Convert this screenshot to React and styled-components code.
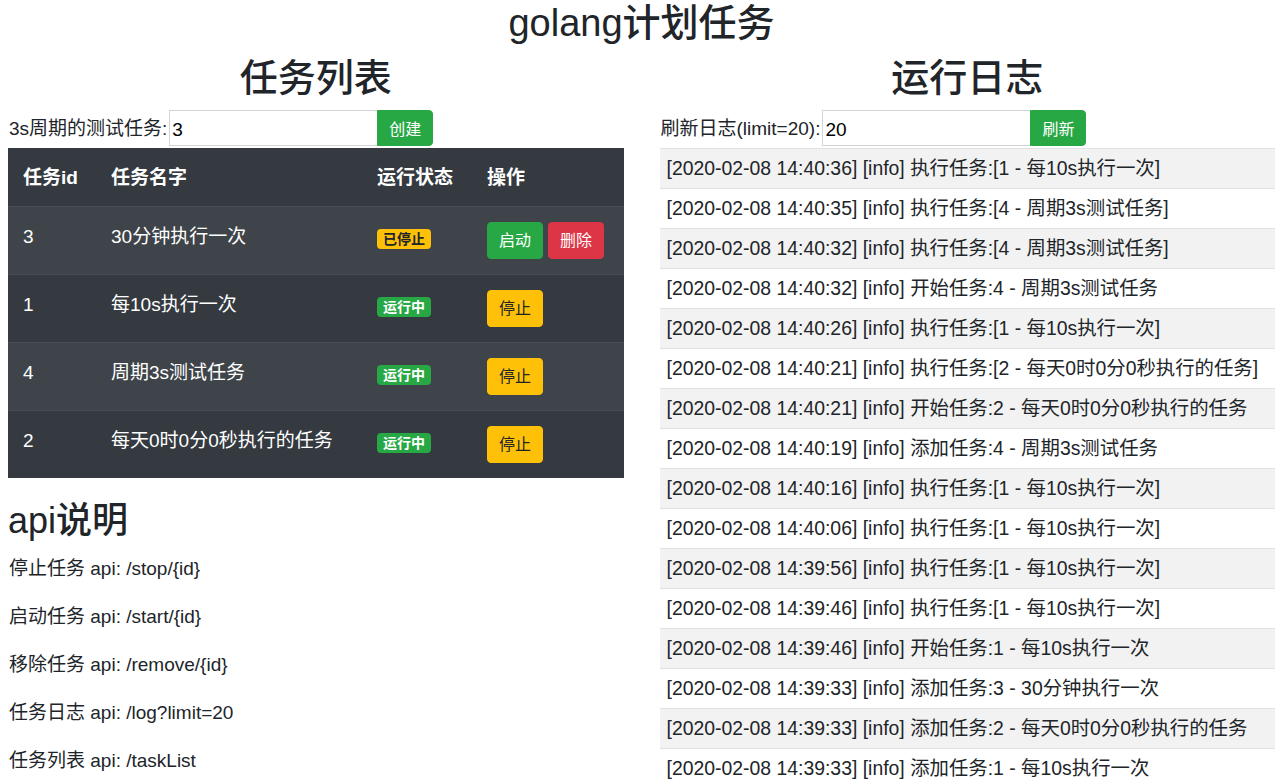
import React from 'react'
import styled, { createGlobalStyle } from 'styled-components'

const GlobalStyle = createGlobalStyle`
    body {
        margin: 0;
        font-family: "Liberation Sans", "Noto Sans CJK SC", sans-serif;
        font-size: 19px;
        line-height: 29px;
        color: #212529;
        background: #fff;
    }
    * { box-sizing: border-box; }
`

const Page = styled.div`
    padding: 0 5px 0 8px;
`

const Title = styled.h1`
    margin: 0 0 9px;
    font-size: 38px;
    font-weight: 500;
    line-height: 46px;
    text-align: center;
`

const Columns = styled.div`
    display: grid;
    grid-template-columns: 1fr 1fr;
    column-gap: 36px;
`

const Column = styled.section`
    min-width: 0;
`

const Heading = styled.h1`
    margin: 0 0 9px;
    font-size: 38px;
    font-weight: 500;
    line-height: 46px;
    text-align: center;
`

const SubHeading = styled.h2`
    margin: 21px 0 12px;
    font-size: 36px;
    font-weight: 500;
    line-height: 43px;
`

const FormRow = styled.form`
    display: flex;
    align-items: center;
    margin-bottom: 2px;
`

const Label = styled.label`
    padding-left: 1px;
    padding-right: 2px;
`

const Input = styled.input`
    width: 208px;
    height: 36px;
    padding: 4px 2px 0;
    border: 1px solid #d4d4d4;
    border-right: none;
    font-family: inherit;
    font-size: 19px;
    color: #000;
    outline: none;
`

const SubmitButton = styled.button`
    height: 36px;
    padding: 0 11px;
    border: 1px solid #28a745;
    border-radius: 0 4px 4px 0;
    background: #28a745;
    color: #fff;
    font-family: inherit;
    font-size: 16px;
`

const TaskTable = styled.table`
    width: 100%;
    border-collapse: collapse;
    background: #343a40;
    color: #fff;
`

const Th = styled.th`
    padding: 15px 15px 14px;
    text-align: left;
    font-weight: bold;
    line-height: 29px;
    vertical-align: bottom;
    width: ${p => p.$w || 'auto'};
`

const Tr = styled.tr`
    background: ${p => (p.$striped ? 'rgba(255, 255, 255, 0.05)' : 'transparent')};
    border-top: 1px solid #454d55;
`

const Td = styled.td`
    padding: 15px;
    vertical-align: top;
    line-height: 29px;
`

const Badge = styled.span`
    display: inline-block;
    padding: 3px 6px;
    border-radius: 4px;
    font-size: 14px;
    font-weight: bold;
    line-height: 14px;
    vertical-align: -1px;
    background: ${p => (p.$variant === 'warning' ? '#ffc107' : '#28a745')};
    color: ${p => (p.$variant === 'warning' ? '#212529' : '#fff')};
`

const Actions = styled.div`
    display: flex;
    gap: 5px;
`

const ActionButton = styled.button`
    height: 37px;
    padding: 0 11px;
    border-radius: 4px;
    font-family: inherit;
    font-size: 16px;
    line-height: 35px;
    border: 1px solid ${p => p.$bg};
    background: ${p => p.$bg};
    color: ${p => p.$fg};
`

const ApiLine = styled.p`
    margin: 0 0 19px;
    padding-left: 1px;
`

const LogTable = styled.div`
    display: flex;
    flex-direction: column;
`

const LogRow = styled.div`
    padding: 5px 7px;
    border-top: 1px solid #dee2e6;
    font-size: 19.4px;
    white-space: nowrap;
    overflow: hidden;
    background: ${p => (p.$striped ? 'rgba(0, 0, 0, 0.05)' : 'transparent')};
`

const tasks = [
    { id: 3, name: '30分钟执行一次', running: false },
    { id: 1, name: '每10s执行一次', running: true },
    { id: 4, name: '周期3s测试任务', running: true },
    { id: 2, name: '每天0时0分0秒执行的任务', running: true },
]

const apis = [
    '停止任务 api: /stop/{id}',
    '启动任务 api: /start/{id}',
    '移除任务 api: /remove/{id}',
    '任务日志 api: /log?limit=20',
    '任务列表 api: /taskList',
]

const logs = [
    '[2020-02-08 14:40:36] [info] 执行任务:[1 - 每10s执行一次]',
    '[2020-02-08 14:40:35] [info] 执行任务:[4 - 周期3s测试任务]',
    '[2020-02-08 14:40:32] [info] 执行任务:[4 - 周期3s测试任务]',
    '[2020-02-08 14:40:32] [info] 开始任务:4 - 周期3s测试任务',
    '[2020-02-08 14:40:26] [info] 执行任务:[1 - 每10s执行一次]',
    '[2020-02-08 14:40:21] [info] 执行任务:[2 - 每天0时0分0秒执行的任务]',
    '[2020-02-08 14:40:21] [info] 开始任务:2 - 每天0时0分0秒执行的任务',
    '[2020-02-08 14:40:19] [info] 添加任务:4 - 周期3s测试任务',
    '[2020-02-08 14:40:16] [info] 执行任务:[1 - 每10s执行一次]',
    '[2020-02-08 14:40:06] [info] 执行任务:[1 - 每10s执行一次]',
    '[2020-02-08 14:39:56] [info] 执行任务:[1 - 每10s执行一次]',
    '[2020-02-08 14:39:46] [info] 执行任务:[1 - 每10s执行一次]',
    '[2020-02-08 14:39:46] [info] 开始任务:1 - 每10s执行一次',
    '[2020-02-08 14:39:33] [info] 添加任务:3 - 30分钟执行一次',
    '[2020-02-08 14:39:33] [info] 添加任务:2 - 每天0时0分0秒执行的任务',
    '[2020-02-08 14:39:33] [info] 添加任务:1 - 每10s执行一次',
]

export default function App() {
    return (
        <Page>
            <GlobalStyle />
            <Title>golang计划任务</Title>
            <Columns>
                <Column>
                    <Heading>任务列表</Heading>
                    <FormRow onSubmit={e => e.preventDefault()}>
                        <Label>3s周期的测试任务:</Label>
                        <Input defaultValue="3" />
                        <SubmitButton type="submit">创建</SubmitButton>
                    </FormRow>
                    <TaskTable>
                        <thead>
                            <tr>
                                <Th $w="88px">任务id</Th>
                                <Th $w="266px">任务名字</Th>
                                <Th $w="110px">运行状态</Th>
                                <Th>操作</Th>
                            </tr>
                        </thead>
                        <tbody>
                            {tasks.map((t, i) => (
                                <Tr key={t.id} $striped={i % 2 === 0}>
                                    <Td>{t.id}</Td>
                                    <Td>{t.name}</Td>
                                    <Td>
                                        {t.running
                                            ? <Badge $variant="success">运行中</Badge>
                                            : <Badge $variant="warning">已停止</Badge>}
                                    </Td>
                                    <Td>
                                        <Actions>
                                            {t.running ? (
                                                <ActionButton $bg="#ffc107" $fg="#212529">停止</ActionButton>
                                            ) : (
                                                <>
                                                    <ActionButton $bg="#28a745" $fg="#fff">启动</ActionButton>
                                                    <ActionButton $bg="#dc3545" $fg="#fff">删除</ActionButton>
                                                </>
                                            )}
                                        </Actions>
                                    </Td>
                                </Tr>
                            ))}
                        </tbody>
                    </TaskTable>
                    <SubHeading>api说明</SubHeading>
                    {apis.map(a => <ApiLine key={a}>{a}</ApiLine>)}
                </Column>
                <Column>
                    <Heading>运行日志</Heading>
                    <FormRow onSubmit={e => e.preventDefault()}>
                        <Label>刷新日志(limit=20):</Label>
                        <Input defaultValue="20" />
                        <SubmitButton type="submit">刷新</SubmitButton>
                    </FormRow>
                    <LogTable>
                        {logs.map((l, i) => (
                            <LogRow key={i} $striped={i % 2 === 0}>{l}</LogRow>
                        ))}
                    </LogTable>
                </Column>
            </Columns>
        </Page>
    )
}
